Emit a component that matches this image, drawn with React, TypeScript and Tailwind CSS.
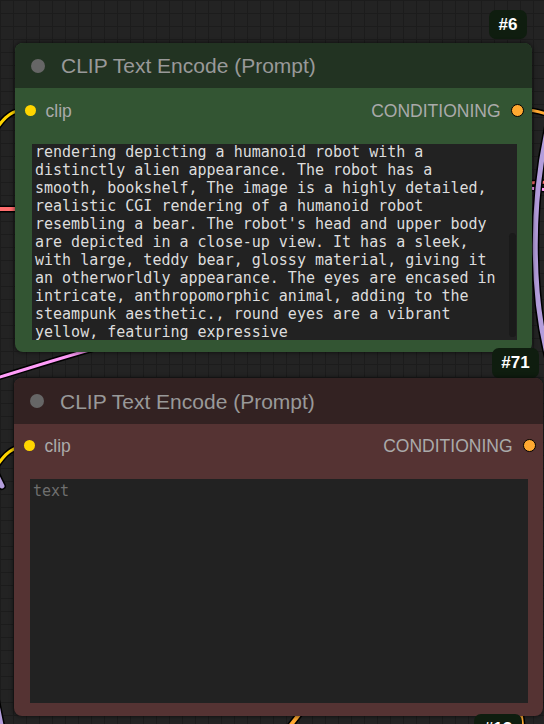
const promptLines = [
  'rendering depicting a humanoid robot with a',
  'distinctly alien appearance. The robot has a',
  'smooth, bookshelf, The image is a highly detailed,',
  'realistic CGI rendering of a humanoid robot',
  "resembling a bear. The robot's head and upper body",
  'are depicted in a close-up view. It has a sleek,',
  'with large, teddy bear, glossy material, giving it',
  'an otherworldly appearance. The eyes are encased in',
  'intricate, anthropomorphic animal, adding to the',
  'steampunk aesthetic., round eyes are a vibrant',
  'yellow, featuring expressive',
]

const wires = [
  { d: 'M -10 138 C 0 124, 6 112, 22 110', color: '#ffd500', w: 3 },
  { d: 'M 525 110 C 535 110, 540 112, 550 115', color: '#ffa931', w: 3 },
  { d: 'M -5 209 L 22 209', color: '#ff6e6e', w: 4 },
  { d: 'M 528 183 L 550 182', color: '#ff6e6e', w: 3 },
  { d: 'M 528 188 L 550 190', color: '#ff9cf9', w: 3 },
  { d: 'M 550 118 C 530 200, 530 300, 552 372', color: '#b39ddb', w: 5 },
  { d: 'M -10 380 C 30 368, 60 358, 100 347', color: '#ff9cf9', w: 3 },
  { d: 'M -10 476 C 0 462, 5 450, 22 446', color: '#ffd500', w: 3 },
  { d: 'M -6 470 L 2 486', color: '#b39ddb', w: 5 },
  { d: 'M -4 700 L 2 730', color: '#b39ddb', w: 5 },
  { d: 'M 287 730 L 301 712', color: '#ffa931', w: 4 },
  { d: 'M 521 712 L 523 730', color: '#ffa931', w: 3 },
]

function Badge({ label, className }: { label: string; className: string }) {
  return (
    <div
      className={`absolute flex items-center justify-center rounded-[7px] bg-[#0f1d0f] text-[17px] font-bold text-white font-['Liberation_Sans',Arial,sans-serif] ${className}`}
    >
      {label}
    </div>
  )
}

function SlotRow({ h, rightPad }: { h: string; rightPad: string }) {
  return (
    <div className={`flex items-center justify-between ${h}`}>
      <div className="flex items-center pl-[9.5px]">
        <span className="w-[11px] h-[11px] rounded-full bg-[#ffd500]" />
        <span className="ml-[10px] mt-[3px] text-[17.5px] text-[#aaa] leading-none">clip</span>
      </div>
      <div className={`flex items-center ${rightPad}`}>
        <span className="mt-[3px] text-[17.5px] text-[#aaa] leading-none">CONDITIONING</span>
        <span className="ml-[10px] w-[13px] h-[13px] rounded-full bg-[#ffa931] border-[1.5px] border-black" />
      </div>
    </div>
  )
}

export default function App() {
  return (
    <div className="relative w-[544px] h-[724px] overflow-hidden bg-[#232323] bg-[linear-gradient(to_right,#1c1c1c_1px,transparent_1px),linear-gradient(to_bottom,#1c1c1c_1px,transparent_1px)] bg-[size:13px_13px] font-['Liberation_Sans',Arial,sans-serif]">
      <svg className="absolute inset-0" width="544" height="724">
        {wires.map((w, i) => (
          <g key={i} fill="none" strokeLinecap="round">
            <path d={w.d} stroke="#000" strokeWidth={w.w + 3} />
            <path d={w.d} stroke={w.color} strokeWidth={w.w} />
          </g>
        ))}
      </svg>

      <Badge label="#6" className="left-[489px] top-[10px] w-[38px] h-[29px]" />

      {/* green node */}
      <div className="absolute left-[15px] top-[43px] w-[517px] h-[309px] rounded-[8px] overflow-hidden bg-[#335533] shadow-[0_0_5px_rgba(0,0,0,0.7)] flex flex-col">
        <div className="h-[45px] shrink-0 bg-[#223322] flex items-center">
          <span className="ml-[16px] w-[14px] h-[14px] rounded-full bg-[#666]" />
          <span className="ml-[16px] text-[21px] text-[#999] leading-none">CLIP Text Encode (Prompt)</span>
        </div>
        <SlotRow h="h-[44px]" rightPad="pr-[8.5px]" />
        <div className="relative mt-[12px] ml-[17px] mr-[15px] h-[196px] bg-[#222] overflow-hidden">
          <div className="-mt-[1px] pl-[3px] font-['DejaVu_Sans_Mono',monospace] text-[15px] leading-[18px] text-[#ddd] whitespace-pre">
            {promptLines.map((l, i) => (
              <div key={i}>{l}</div>
            ))}
          </div>
          <div className="absolute right-[1px] top-[89px] w-[7px] h-[104px] rounded-full bg-[#1a1a1a]" />
        </div>
      </div>

      <Badge label="#71" className="left-[492px] top-[348px] w-[47px] h-[30px]" />

      {/* brown node */}
      <div className="absolute left-[14px] top-[378px] w-[529px] h-[338px] rounded-[8px] overflow-hidden bg-[#553333] shadow-[0_0_5px_rgba(0,0,0,0.7)] flex flex-col">
        <div className="h-[46px] shrink-0 bg-[#332222] flex items-center">
          <span className="ml-[16px] w-[14px] h-[14px] rounded-full bg-[#666]" />
          <span className="ml-[16px] text-[21px] text-[#999] leading-none">CLIP Text Encode (Prompt)</span>
        </div>
        <SlotRow h="h-[42px]" rightPad="pr-[7.5px]" />
        <div className="mt-[13px] ml-[16px] mr-[15px] h-[224px] bg-[#222]">
          <div className="pt-[3px] pl-[3px] font-['DejaVu_Sans_Mono',monospace] text-[15px] leading-[18px] text-[#6f6f6f]">
            text
          </div>
        </div>
      </div>

      <Badge label="#13" className="left-[474px] top-[714px] w-[48px] h-[30px]" />
    </div>
  )
}
